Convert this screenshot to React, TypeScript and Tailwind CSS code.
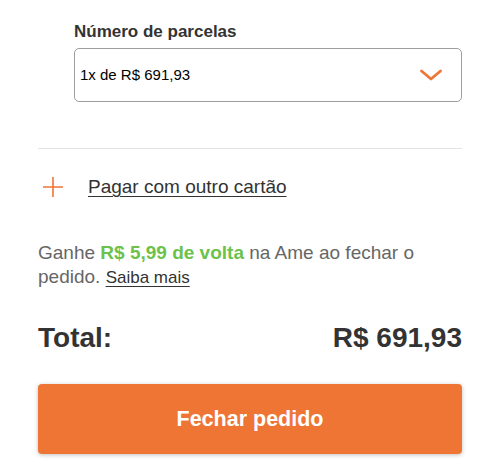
import React from 'react'

export default function App() {
    return (
        <div className="w-[500px] h-[461px] bg-white overflow-hidden font-['Liberation_Sans',Arial,sans-serif]">
            <div className="px-[38px]">
                <div className="pl-[36px] pt-[21px]">
                    <p className="text-[17px] leading-[22px] font-bold text-[#333]">Número de parcelas</p>
                    <div className="mt-[5px] h-[54px] border border-[#9e9e9e] rounded-[5px] flex items-center justify-between pl-[5px] pr-[18px]">
                        <span className="text-[15px] text-black">1x de R$ 691,93</span>
                        <svg width="24" height="14" viewBox="0 0 24 14" fill="none">
                            <path d="M2.5 3 L12 11 L21.5 3" stroke="#ef7535" strokeWidth="2.8" strokeLinecap="round" strokeLinejoin="round" />
                        </svg>
                    </div>
                </div>
                <div className="mt-[46px] border-t border-[#e3e3e3]"></div>
                <div className="mt-[26px] flex items-center">
                    <svg width="22" height="22" viewBox="0 0 22 22" className="ml-[4px]">
                        <path d="M11 1 V21 M1 11 H21" stroke="#ef7535" strokeWidth="1.6" />
                    </svg>
                    <a className="ml-[24px] text-[19px] leading-[24px] text-[#333] underline underline-offset-[3px] decoration-[1px]">Pagar com outro cartão</a>
                </div>
                <p className="mt-[42px] text-[19px] leading-[24px] text-[#666]">
                    Ganhe <span className="font-bold text-[#6cc24a]">R$ 5,99 de volta</span> na Ame ao fechar o pedido.{' '}
                    <a className="text-[17px] text-[#333] underline underline-offset-[3px] decoration-[1px]">Saiba mais</a>
                </p>
                <div className="mt-[31px] flex items-center justify-between text-[28px] leading-[34px] font-bold text-[#333]">
                    <span>Total:</span>
                    <span>R$ 691,93</span>
                </div>
                <button className="mt-[29px] w-full h-[70px] rounded-[4px] bg-[#ef7535] text-white text-[21.5px] font-bold shadow-[0_1px_4px_rgba(0,0,0,0.25)]">
                    Fechar pedido
                </button>
            </div>
        </div>
    )
}
